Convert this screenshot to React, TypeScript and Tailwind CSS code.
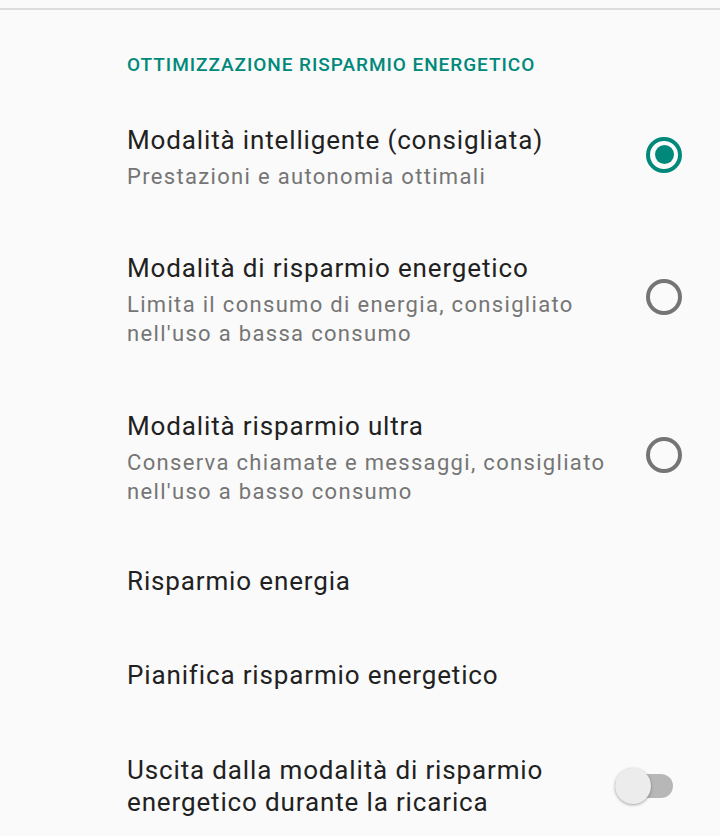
const font = { fontFamily: 'Roboto, "Noto Sans", sans-serif' };

function Radio({ checked }: { checked: boolean }) {
  return (
    <div className="w-[36px] h-[36px] mb-[6px] shrink-0 flex items-center justify-center">
      {checked ? (
        <div className="w-[36px] h-[36px] rounded-full border-[4px] border-[#00897b] flex items-center justify-center">
          <div className="w-[19px] h-[19px] rounded-full bg-[#00897b]" />
        </div>
      ) : (
        <div className="w-[36px] h-[36px] rounded-full border-[4px] border-[#757575]" />
      )}
    </div>
  );
}

function Toggle() {
  return (
    <div className="relative w-[58px] h-[36px] shrink-0 flex items-center">
      <div className="w-[58px] h-[24px] rounded-full bg-[#b7b7b7]" />
      <div className="absolute left-0 top-0 w-[36px] h-[36px] rounded-full bg-[#ececec] shadow-[0_1px_3px_rgba(0,0,0,0.35)]" />
    </div>
  );
}

function Item({
  title,
  sub,
  right,
  pad,
}: {
  title: string;
  sub?: string;
  right?: React.ReactNode;
  pad: string;
}) {
  return (
    <div className={`flex items-center pl-[127px] ${pad}`}>
      <div className="flex-1 min-w-0 pr-[24px]">
        <div className="text-[26px] leading-[32px] tracking-[0.033em] text-[#212121]">{title}</div>
        {sub && (
          <div className="mt-[6px] text-[22px] leading-[29px] tracking-[0.06em] text-[#757575]">{sub}</div>
        )}
      </div>
      {right}
    </div>
  );
}

export default function App() {
  return (
    <div className="w-[720px] h-[836px] bg-[#fafafa] overflow-hidden" style={font}>
      <div className="h-[8px]" />
      <div className="h-[2px] bg-[#dcdcdf]" />
      <div className="pl-[127px] pt-[43px] text-[19px] leading-[24px] font-medium tracking-[0.05em] text-[#00897b]">
        OTTIMIZZAZIONE RISPARMIO ENERGETICO
      </div>

      <div className="pt-[12px]">
        <Item
          pad="pt-[35px] pb-[30px] pr-[38px]"
          title="Modalità intelligente (consigliata)"
          sub="Prestazioni e autonomia ottimali"
          right={<Radio checked />}
        />
        <Item
          pad="py-[31px] pr-[38px]"
          title="Modalità di risparmio energetico"
          sub="Limita il consumo di energia, consigliato nell'uso a bassa consumo"
          right={<Radio checked={false} />}
        />
        <Item
          pad="pt-[31px] pb-[28px] pr-[38px]"
          title="Modalità risparmio ultra"
          sub="Conserva chiamate e messaggi, consigliato nell'uso a basso consumo"
          right={<Radio checked={false} />}
        />
        <Item pad="py-[31px] pr-[38px]" title="Risparmio energia" />
        <Item pad="py-[31px] pr-[38px]" title="Pianifica risparmio energetico" />
        <Item
          pad="pt-[32px] pb-[30px] pr-[47px]"
          title="Uscita dalla modalità di risparmio energetico durante la ricarica"
          right={<Toggle />}
        />
      </div>
    </div>
  );
}
